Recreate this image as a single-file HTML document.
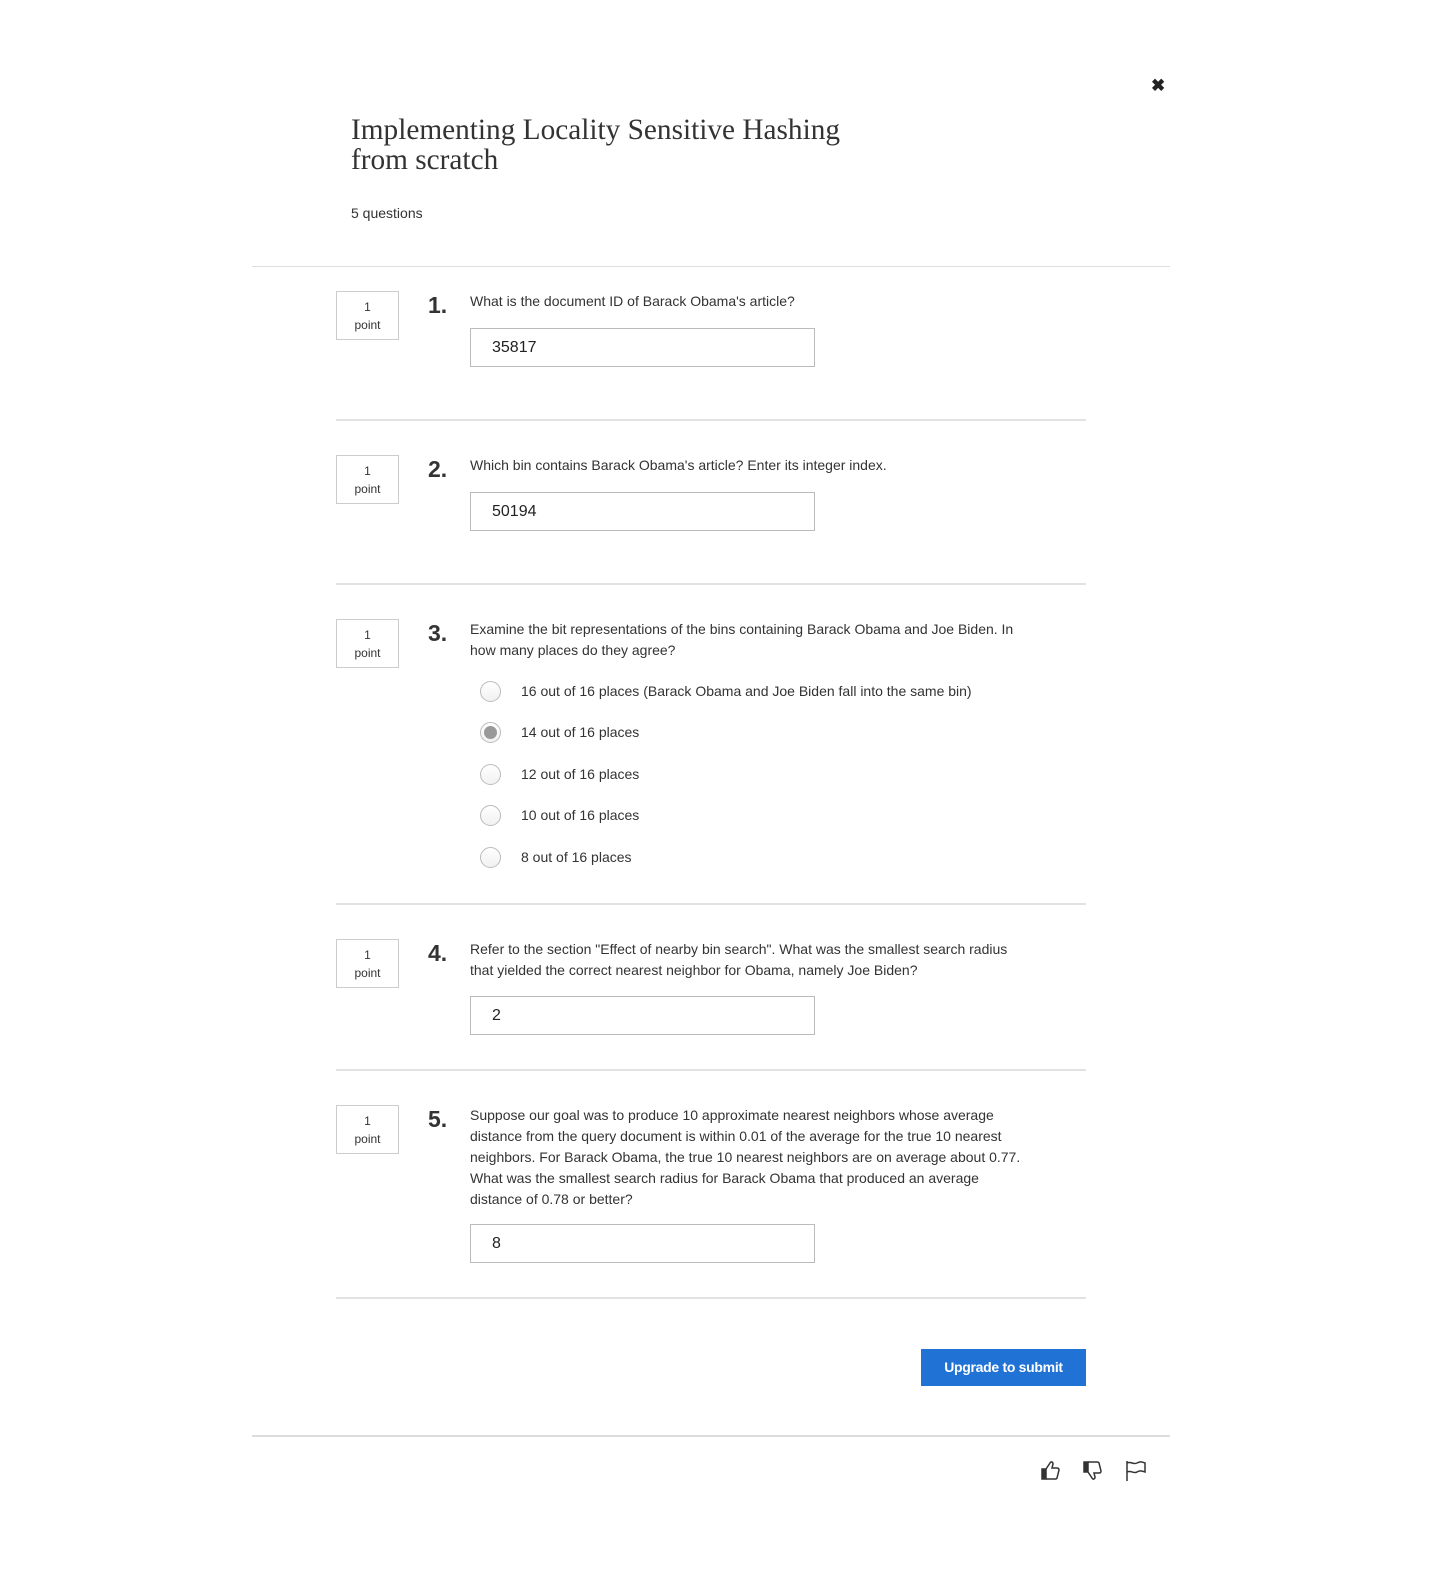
<!DOCTYPE html>
<html><head><meta charset="utf-8"><style>
body{margin:0;width:1440px;height:1588px;background:#fff;position:relative;font-family:"Liberation Sans",sans-serif;color:#333;}
.a{position:absolute}
.t{font-size:14px;line-height:21px;color:#333;white-space:nowrap}
.pt{position:absolute;left:336px;width:61px;height:47px;border:1px solid #ccc;font-size:12px;line-height:18px;text-align:center;box-sizing:content-box}
.pt div{margin-top:6px}
.n{position:absolute;left:428px;font-size:23px;font-weight:bold;color:#333}
.in{position:absolute;left:470px;height:37px;border:1px solid #bbb;font-size:16px;line-height:37px;padding-left:21px;box-sizing:content-box;width:322px;color:#222}
.hr{position:absolute;left:336px;width:750px;height:2px;background:#e2e2e2}
.r{position:absolute;left:480px;width:19px;height:19px;border:1px solid #bbb;border-radius:50%;background:linear-gradient(#fff,#f1f1f1)}
.rl{position:absolute;left:521px;font-size:14px;color:#333}
</style></head><body>
<div class="a" style="left:1151px;top:76px;font-size:17px;font-weight:bold;color:#222">✖</div>
<div class="a" style="left:351px;top:115px;font-family:'Liberation Serif',serif;font-size:29.3px;line-height:30px;color:#333">Implementing Locality Sensitive Hashing<br>from scratch</div>
<div class="a t" style="left:351px;top:203px">5 questions</div>
<div class="a" style="left:252px;top:266px;width:918px;height:1px;background:#ddd"></div>

<div class="pt" style="top:291px"><div>1<br>point</div></div>
<div class="n" style="top:292px">1.</div>
<div class="a t" style="left:470px;top:291px">What is the document ID of Barack Obama's article?</div>
<div class="in" style="top:328px">35817</div>
<div class="hr" style="top:419px"></div>

<div class="pt" style="top:455px"><div>1<br>point</div></div>
<div class="n" style="top:456px">2.</div>
<div class="a t" style="left:470px;top:455px">Which bin contains Barack Obama's article? Enter its integer index.</div>
<div class="in" style="top:492px">50194</div>
<div class="hr" style="top:583px"></div>

<div class="pt" style="top:619px"><div>1<br>point</div></div>
<div class="n" style="top:620px">3.</div>
<div class="a t" style="left:470px;top:619px">Examine the bit representations of the bins containing Barack Obama and Joe Biden. In<br>how many places do they agree?</div>
<div class="r" style="top:681px"></div><div class="rl" style="top:683px">16 out of 16 places (Barack Obama and Joe Biden fall into the same bin)</div>
<div class="r" style="top:722px"><div style="position:absolute;left:3px;top:3px;width:13px;height:13px;border-radius:50%;background:#999"></div></div><div class="rl" style="top:724px">14 out of 16 places</div>
<div class="r" style="top:764px"></div><div class="rl" style="top:766px">12 out of 16 places</div>
<div class="r" style="top:805px"></div><div class="rl" style="top:807px">10 out of 16 places</div>
<div class="r" style="top:847px"></div><div class="rl" style="top:849px">8 out of 16 places</div>
<div class="hr" style="top:903px"></div>

<div class="pt" style="top:939px"><div>1<br>point</div></div>
<div class="n" style="top:940px">4.</div>
<div class="a t" style="left:470px;top:939px">Refer to the section "Effect of nearby bin search". What was the smallest search radius<br>that yielded the correct nearest neighbor for Obama, namely Joe Biden?</div>
<div class="in" style="top:996px">2</div>
<div class="hr" style="top:1069px"></div>

<div class="pt" style="top:1105px"><div>1<br>point</div></div>
<div class="n" style="top:1106px">5.</div>
<div class="a t" style="left:470px;top:1105px">Suppose our goal was to produce 10 approximate nearest neighbors whose average<br>distance from the query document is within 0.01 of the average for the true 10 nearest<br>neighbors. For Barack Obama, the true 10 nearest neighbors are on average about 0.77.<br>What was the smallest search radius for Barack Obama that produced an average<br>distance of 0.78 or better?</div>
<div class="in" style="top:1224px">8</div>
<div class="hr" style="top:1297px"></div>

<div class="a" style="left:921px;top:1349px;width:165px;height:37px;background:#2073d5;color:#fff;font-weight:bold;font-size:14px;line-height:37px;text-align:center;letter-spacing:-0.3px">Upgrade to submit</div>
<div class="a" style="left:252px;top:1435px;width:918px;height:2px;background:#ddd"></div>

<svg class="a" style="left:1040px;top:1459px" width="20" height="22" viewBox="0 0 20 22" fill="none" stroke="#333" stroke-width="1.5"><path d="M2 10h4v10H2z" fill="#333"/><path d="M6 10l4-6c1-2 3-1 3 1l-1 4h5c1.5 0 2 1 2 2l-2 8c-.3 1-1 1-2 1H6"/></svg>
<svg class="a" style="left:1082px;top:1460px" width="20" height="22" viewBox="0 0 20 22" fill="none" stroke="#333" stroke-width="1.5"><path d="M2 2h4v10H2z" fill="#333"/><path d="M6 12l4 6c1 2 3 1 3-1l-1-4h5c1.5 0 2-1 2-2l-2-8c-.3-1-1-1-2-1H6"/></svg>
<svg class="a" style="left:1125px;top:1460px" width="22" height="22" viewBox="0 0 22 22" fill="none" stroke="#333" stroke-width="1.5"><path d="M2 1v20"/><path d="M2 3c4-2 6 2 10 0s5-1 8 0v9c-3-1-5-2-8 0s-6-2-10 0"/></svg>
</body></html>
